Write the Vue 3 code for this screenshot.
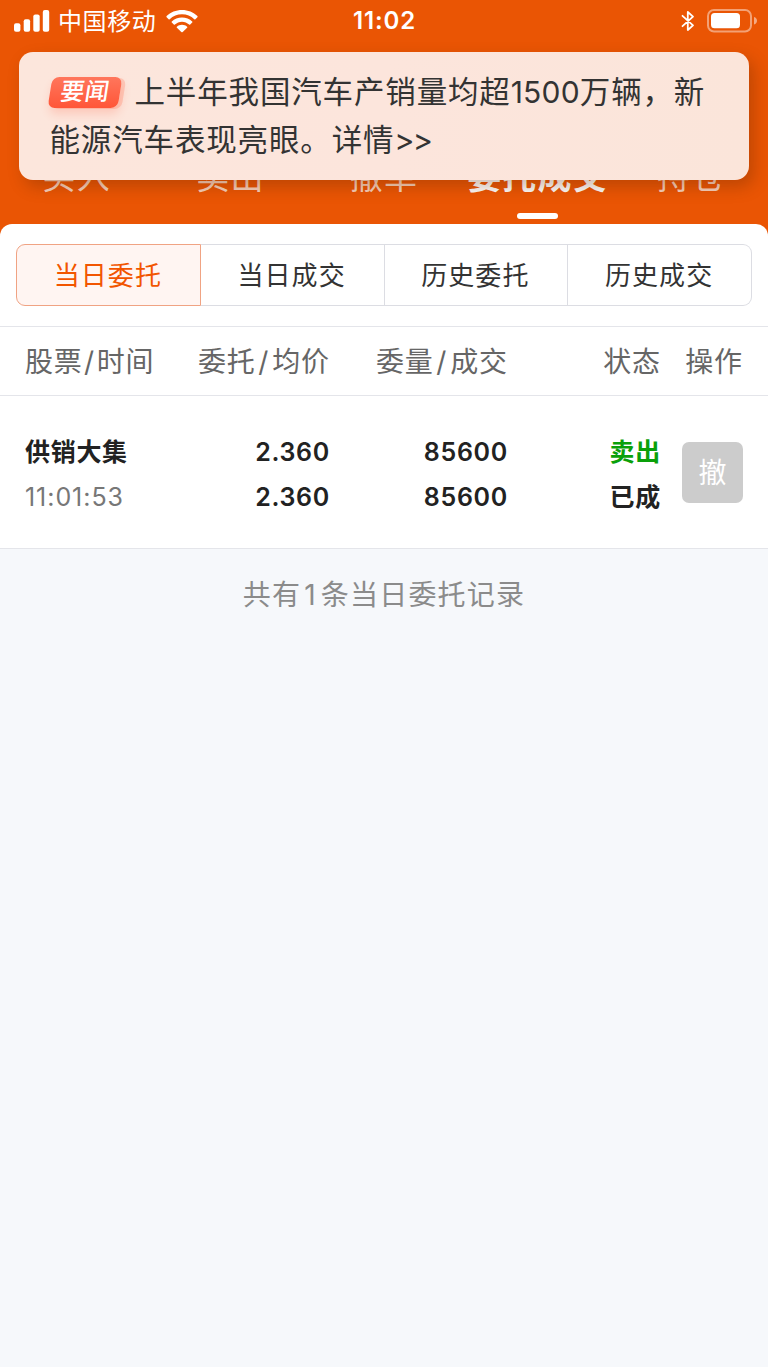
<template>
  <div class="page">
    <header class="header">
      <div class="status-bar">
        <div class="carrier">
          <svg class="signal" width="36" height="24" viewBox="0 0 36 24">
            <rect x="0" y="14.3" width="6.4" height="8.4" rx="2" />
            <rect x="9.7" y="10.3" width="6.4" height="12.4" rx="2" />
            <rect x="19.3" y="5.6" width="6.4" height="17.1" rx="2" />
            <rect x="28.8" y="1" width="6.4" height="21.7" rx="2" />
          </svg>
          <span class="carrier-name">中国移动</span>
          <svg class="wifi" width="32" height="24" viewBox="0 0 32 24">
            <path d="M16 1C10 1 4.500 3.200.6 7.100q-.5.6 0 1.100l2 2q.6.5 1.100 0C7 7 11.300 5.200 16 5.200S25 7 28.300 10.200q.5.5 1.100 0l2-2q.5-.5 0-1.100C27.500 3.200 22 1 16 1Z" />
            <path d="M16 8.500c-4 0-7.600 1.500-10.200 4q-.6.600 0 1.100l2 2q.6.500 1.100 0C10.900 13.800 13.300 12.700 16 12.700s5.100 1.100 7.100 2.900q.5.500 1.100 0l2-2q.6-.5 0-1.100C23.600 10 20 8.500 16 8.500Z" />
            <path d="M16 15.800c-2 0-3.700.7-5.100 1.900q-.5.500 0 1l4.400 4.300q.7.600 1.400 0l4.400-4.300q.5-.5 0-1C19.700 16.500 18 15.800 16 15.800Z" />
          </svg>
        </div>
        <span class="clock">11:02</span>
        <div class="indicators">
          <svg class="bluetooth" width="14" height="22" viewBox="0 0 14 22">
            <path d="M1.500 5.800 12 15.300 6.800 20V2L12 6.700 1.500 16.200" />
          </svg>
          <svg class="battery" width="50" height="24" viewBox="0 0 50 24">
            <rect class="shell" x="1" y="1" width="43" height="21.500" rx="6" />
            <rect class="level" x="4" y="4" width="29" height="15.300" rx="3.500" />
            <path class="cap" d="M47 8q3 1 3 3.800T47 15.500Z" />
          </svg>
        </div>
      </div>
      <nav class="tabs">
        <div v-for="tab in tabs" :key="tab" :class="['tab', tab === activeTab && 'active']">
          <span>{{ tab }}</span>
        </div>
      </nav>
      <div class="notice">
        <span class="tag">要闻</span>上半年我国汽车产销量均超<span class="num">1500</span>万辆，新<br>能源汽车表现亮眼。详情<span class="more">&gt;&gt;</span>
      </div>
    </header>

    <main class="panel">
      <div class="segments">
        <div v-for="(item, i) in segments" :key="item" :class="['segment', i === 0 && 'selected']">
          {{ item }}
        </div>
      </div>
      <div class="row head">
        <div class="col name">股票<i>/</i>时间</div>
        <div class="col price">委托<i>/</i>均价</div>
        <div class="col amount">委量<i>/</i>成交</div>
        <div class="col state">状态</div>
        <div class="col action">操作</div>
      </div>
      <div v-for="order in orders" :key="order.time" class="row order">
        <div class="col name">
          <div>{{ order.name }}</div>
          <div class="time">{{ order.time }}</div>
        </div>
        <div class="col price">
          <div>{{ order.price }}</div>
          <div>{{ order.avg }}</div>
        </div>
        <div class="col amount">
          <div>{{ order.amount }}</div>
          <div>{{ order.filled }}</div>
        </div>
        <div class="col state">
          <div class="sell">{{ order.side }}</div>
          <div>{{ order.state }}</div>
        </div>
        <div class="col action">
          <button class="cancel" disabled>撤</button>
        </div>
      </div>
    </main>
    <p class="total">共有<span class="count">{{ orders.length }}</span>条当日委托记录</p>
  </div>
</template>

<script setup>
const tabs = ['买入', '卖出', '撤单', '委托成交', '持仓']
const activeTab = '委托成交'
const segments = ['当日委托', '当日成交', '历史委托', '历史成交']
const orders = [
  {
    name: '供销大集',
    time: '11:01:53',
    price: '2.360',
    avg: '2.360',
    amount: '85600',
    filled: '85600',
    side: '卖出',
    state: '已成',
  },
]
</script>

<style>
body {
  margin: 0;
  background: #f6f8fb;
}
</style>

<style scoped>
.page {
  width: 768px;
  height: 1367px;
  box-sizing: border-box;
  overflow: hidden;
  background: #f6f8fb;
  font-family: Inter, "Noto Sans CJK SC", sans-serif;
  color: #222;
}
.header {
  position: relative;
  height: 236px;
  background: #ea5504;
}
.status-bar {
  display: grid;
  grid-template-columns: 1fr auto 1fr;
  align-items: center;
  height: 42px;
  padding: 0 11px 0 14px;
  color: #fff;
  fill: #fff;
}
.carrier {
  display: flex;
  align-items: center;
  height: 42px;
}
.carrier-name {
  margin: 0 9.5px 0 8px;
  padding-top: 2px;
  font-size: 24px;
  line-height: 42px;
  letter-spacing: 0.6px;
}
.clock {
  font-size: 24px;
  font-weight: 600;
  line-height: 42px;
  letter-spacing: 0.9px;
  margin-right: 2px;
}
.indicators {
  display: flex;
  justify-content: flex-end;
  align-items: center;
  gap: 12px;
}
.bluetooth {
  fill: none;
  stroke: #fff;
  stroke-width: 1.8;
  stroke-linejoin: round;
  stroke-linecap: round;
}
.shell {
  fill: none;
  stroke: rgba(255, 255, 255, 0.45);
  stroke-width: 2;
}
.cap {
  fill: rgba(255, 255, 255, 0.5);
}

.tabs {
  display: flex;
  height: 65px;
  padding-top: 112px;
}
.tab {
  flex: 1;
  display: flex;
  flex-direction: column;
  align-items: center;
  font-size: 33px;
  line-height: 46px;
  letter-spacing: 1.2px;
  color: rgba(255, 255, 255, 0.75);
}
.tab.active {
  font-size: 34px;
  font-weight: 700;
  color: #fff;
}
.tab.active::after {
  content: '';
  width: 41px;
  height: 6px;
  margin-top: 13px;
  border-radius: 3px;
  background: #fff;
}

.notice {
  position: absolute;
  top: 51.5px;
  left: 18.5px;
  width: 730.5px;
  height: 128.800px;
  padding: 16px 0 0 31px;
  box-sizing: border-box;
  border-radius: 14px;
  background: linear-gradient(90deg, #fce6dc, #fce5dc 50%, #fbe5da);
  box-shadow: 5px 7px 16px rgba(100, 40, 0, 0.32);
  font-size: 30.5px;
  line-height: 47.5px;
  letter-spacing: 0.85px;
  white-space: nowrap;
  color: #333;
}
.num {
  font-size: 30px;
  letter-spacing: 0.2px;
}
.more {
  letter-spacing: -1.8px;
}
.tag {
  display: inline-block;
  width: 70px;
  height: 31px;
  margin: 0 14.5px 0 0.5px;
  border-radius: 7px;
  background: linear-gradient(#ff765c, #ff5638);
  box-shadow: 4px 1px 0 rgba(255, 110, 80, 0.25), 2px 6px 10px rgba(255, 86, 56, 0.2);
  font-size: 24px;
  font-weight: 500;
  line-height: 29px;
  letter-spacing: 0.5px;
  text-align: center;
  vertical-align: 3px;
  color: #fff;
  transform: skewX(-9deg);
}

.panel {
  position: relative;
  margin-top: -12.5px;
  padding-top: 20px;
  border-radius: 12px 12px 0 0;
  background: #fff;
}
.segments {
  display: flex;
  height: 62.5px;
  margin: 0 16px;
}
.segment {
  flex: 1;
  box-sizing: border-box;
  padding-right: 1px;
  border: 1px solid #dcdde3;
  border-left: 0;
  font-size: 26px;
  line-height: 61px;
  letter-spacing: 1.1px;
  text-align: center;
  color: #333;
}
.segment:last-child {
  border-radius: 0 9px 9px 0;
}
.segment.selected {
  border: 1px solid #f0a383;
  border-radius: 9px 0 0 9px;
  background: #fff5f2;
  color: #f25500;
}

.row {
  display: grid;
  grid-template-columns: 145px 160px 178px 153px 82px;
  padding-left: 25px;
  border-bottom: 1px solid #e4e5ea;
}
.col {
  text-align: right;
}
.col.name {
  text-align: left;
  white-space: nowrap;
}
.head {
  box-sizing: border-box;
  height: 70px;
  margin-top: 20px;
  border-top: 1px solid #e4e5ea;
  font-size: 28px;
  line-height: 70px;
  letter-spacing: 0.9px;
  color: #666;
}
.head i {
  margin: 0 3px 0 2.5px;
  font-style: normal;
}
.head .name {
  letter-spacing: 0.7px;
}
.head .name i {
  margin: 0 2px 0 1.5px;
}
.order {
  height: 152.5px;
  box-sizing: border-box;
  padding-top: 34px;
  font-size: 25px;
  font-weight: 600;
  line-height: 45px;
  letter-spacing: 0.7px;
}
.time {
  font-weight: 400;
  letter-spacing: 0.95px;
  color: #777;
}
.sell {
  color: #0aa00a;
}
.cancel {
  width: 61px;
  height: 61px;
  margin-top: 12px;
  padding: 0;
  border: 0;
  border-radius: 7px;
  background: #ccc;
  font: 28px/62px Inter, "Noto Sans CJK SC", sans-serif;
  color: #fff;
}
.total {
  margin: 23.5px 0 0;
  font-size: 28px;
  line-height: 46px;
  letter-spacing: 1.2px;
  text-align: center;
  color: #8b8b8b;
}
.count {
  margin: 0 4px 0 3px;
}
</style>
